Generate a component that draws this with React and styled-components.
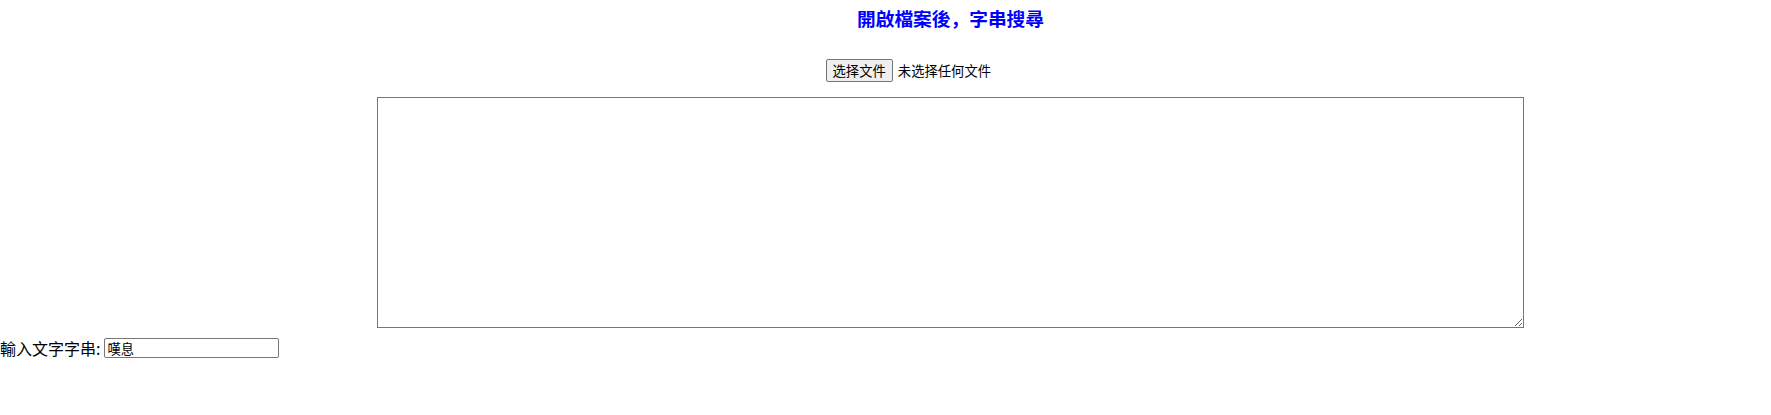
import React, { useState } from "react";
import styled, { createGlobalStyle } from "styled-components";

const Global = createGlobalStyle`
  html, body { margin: 0; padding: 0; background: #ffffff; }
  body {
    font-family: "Noto Sans CJK SC", "Noto Sans CJK TC", "Noto Sans", sans-serif;
    color: #000000;
  }
`;

const Page = styled.div`
  width: 1771px;
`;

const Center = styled.section`
  padding-left: 130px;
  text-align: center;
`;

const Title = styled.h3`
  margin: 4px 0 0;
  font-size: 18.72px;
  line-height: 27px;
  font-weight: bold;
  color: #0000ff;
  font-family: "Noto Sans CJK SC", "Noto Sans CJK TC", sans-serif;
`;

const FilePicker = styled.div`
  width: 250px;
  margin: 28px auto 0;
  display: flex;
  align-items: center;
  gap: 5px;
  font-size: 13.33px;
  font-family: "Noto Sans CJK SC", sans-serif;
`;

const FileButton = styled.button`
  font: inherit;
  height: 23px;
  padding: 0 6px;
  background: #efefef;
  border: 1px solid #767676;
  border-radius: 2px;
  color: #000;
  line-height: 21px;
`;

const FileName = styled.span`
  line-height: 23px;
  white-space: nowrap;
`;

const Area = styled.textarea`
  display: block;
  box-sizing: border-box;
  width: 1147px;
  height: 231px;
  margin: 15px auto 0;
  border: 1px solid #767676;
  border-radius: 0;
  padding: 2px;
  font-family: "Liberation Mono", monospace;
  font-size: 13.33px;
  resize: both;
  outline: none;
`;

const SearchRow = styled.div`
  margin-top: 9px;
  display: flex;
  align-items: center;
  font-size: 16px;
  line-height: 22px;
`;

const Label = styled.label`
  white-space: nowrap;
  margin-right: 4px;
`;

const TextInput = styled.input`
  box-sizing: border-box;
  width: 175px;
  height: 20px;
  padding: 1px 2px;
  border: 1px solid #767676;
  border-radius: 2px;
  font-family: "Noto Sans CJK SC", "Noto Sans CJK TC", sans-serif;
  font-size: 13.33px;
  line-height: 16px;
  color: #000;
  outline: none;
`;

export default function App() {
  const [q, setQ] = useState("嘆息");
  return (
    <Page>
      <Global />
      <Center>
        <Title>開啟檔案後，字串搜尋</Title>
        <FilePicker>
          <FileButton type="button">选择文件</FileButton>
          <FileName>未选择任何文件</FileName>
        </FilePicker>
        <Area />
      </Center>
      <SearchRow>
        <Label htmlFor="q">輸入文字字串:</Label>
        <TextInput id="q" value={q} onChange={(e) => setQ(e.target.value)} />
      </SearchRow>
    </Page>
  );
}
